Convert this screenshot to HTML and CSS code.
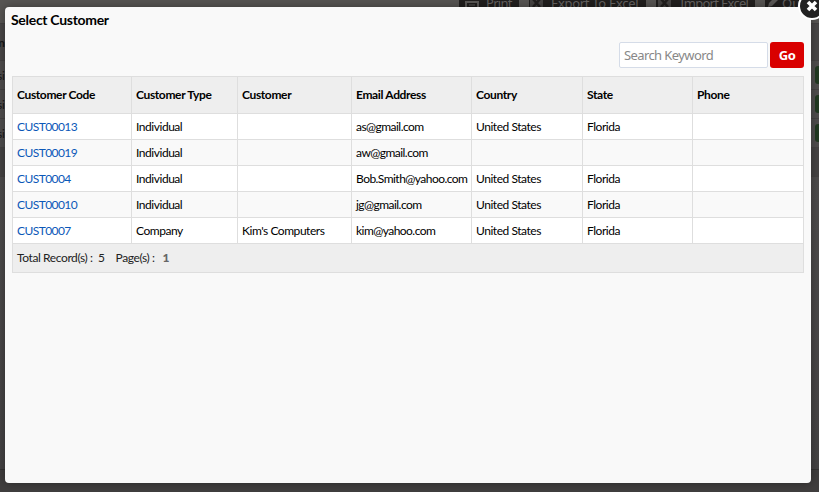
FILE: index.html
```html
<!DOCTYPE html>
<html lang="en">
<head>
<meta charset="utf-8">
<title>Select Customer</title>
<link rel="stylesheet" href="styles.css">
</head>
<body>
<div class="page">
  <div class="toolbar">
    <span class="tool print"><svg width="16" height="14" viewBox="0 0 16 14"><path d="M1 7h14v7H1zM3 9v4h10V9z" fill="#5b5957" fill-rule="evenodd"/><path d="M5 11h6" stroke="#5b5957"/></svg>Print</span>
    <span class="tool export"><svg width="13" height="14" viewBox="0 0 13 14"><path d="M0 1h13v13H0z" fill="#454342"/><path d="M3 5l7 8M10 5l-7 8" stroke="#211f1e" stroke-width="2.5"/></svg>Export To Excel</span>
    <span class="tool import"><svg width="13" height="14" viewBox="0 0 13 14"><path d="M0 1h13v13H0z" fill="#454342"/><path d="M3 5l7 8M10 5l-7 8" stroke="#211f1e" stroke-width="2.5"/></svg>Import Excel</span>
    <span class="tool quick"><svg width="12" height="14" viewBox="0 0 12 14"><path d="M2 13l1-4 6-6 3 3-6 6z" fill="#5b5957"/></svg>Qu</span>
  </div>
  <div class="line head"><b>n</b></div>
  <div class="line"><span>si</span><i></i></div>
  <div class="line"><span>si</span><i></i></div>
  <div class="line"><span>si</span><i></i></div>
  <div class="line pager"></div>
  <div class="rest"></div>
  <div class="footer"></div>
</div>
<section class="modal">
  <button class="close" aria-label="Close"><svg width="30" height="30" viewBox="0 0 30 30"><circle cx="15" cy="15" r="13" fill="#222" stroke="#fff" stroke-width="2"/><path d="M11 11l8 8M19 11l-8 8" stroke="#fff" stroke-width="3.6"/></svg></button>
  <h1>Select Customer</h1>
  <form class="search"><input type="text" placeholder="Search Keyword"><button type="button">Go</button></form>
  <table>
    <colgroup><col class="c1"><col class="c2"><col class="c3"><col class="c4"><col class="c5"><col class="c6"><col class="c7"></colgroup>
    <thead><tr><th>Customer Code</th><th>Customer Type</th><th>Customer</th><th>Email Address</th><th>Country</th><th>State</th><th>Phone</th></tr></thead>
    <tbody>
      <tr><td><a>CUST00013</a></td><td>Individual</td><td></td><td>as@gmail.com</td><td>United States</td><td>Florida</td><td></td></tr>
      <tr><td><a>CUST00019</a></td><td>Individual</td><td></td><td>aw@gmail.com</td><td></td><td></td><td></td></tr>
      <tr><td><a>CUST0004</a></td><td>Individual</td><td></td><td>Bob.Smith@yahoo.com</td><td>United States</td><td>Florida</td><td></td></tr>
      <tr><td><a>CUST00010</a></td><td>Individual</td><td></td><td>jg@gmail.com</td><td>United States</td><td>Florida</td><td></td></tr>
      <tr><td><a>CUST0007</a></td><td>Company</td><td>Kim's Computers</td><td>kim@yahoo.com</td><td>United States</td><td>Florida</td><td></td></tr>
    </tbody>
    <tfoot><tr><td colspan="7"><span class="total">Total Record(s) : &nbsp;5</span><span class="pages">Page(s) :</span><b>1</b></td></tr></tfoot>
  </table>
</section>
</body>
</html>
```
FILE: styles.css
```css
* { box-sizing: border-box; }
body { margin: 0; height: 492px; overflow: hidden; background: #504e4d; font: 12px/15px Lato, sans-serif; color: #000; }
.page { height: 492px; display: flex; flex-direction: column; background: #4e4c4c; }
.toolbar { height: 23px; display: flex; gap: 10px; padding-left: 459px; background: #575553; overflow: hidden; flex: none; }
.tool { height: 16px; display: flex; flex: none; background: #211f1e; color: #676463; font: 13px/7px "Noto Sans", sans-serif; white-space: nowrap; }
.tool svg { margin-top: -6px; flex: none; }
.print { width: 60px; padding-left: 5px; gap: 6px; letter-spacing: -.7px; }
.export { width: 117px; padding-left: 1px; gap: 8px; letter-spacing: -.3px; }
.import { width: 99px; padding-left: 2px; gap: 9px; letter-spacing: -.7px; }
.quick { width: 60px; padding-left: 1px; gap: 4px; }
.line { height: 29px; flex: none; display: flex; justify-content: space-between; align-items: center; border-bottom: 1px solid #444242; background: #4f4d4d; }
.line b, .line span { width: 5px; display: flex; justify-content: flex-end; color: #171616; }
.line i { width: 4px; height: 18px; border-radius: 3px 0 0 3px; background: #203820; }
.head { height: 38px; border-top: 1px solid #444242; background: #494747; }
.pager { background: #454343; }
.rest { flex: 1; border-bottom: 1px solid #343232; background: linear-gradient(#4e4c4c, #444243); }
.footer { height: 22px; background: #403e3e; }
.modal { position: absolute; left: 5px; top: 7px; width: 806px; height: 476px; padding: 5px 7px; border-radius: 4px; background: #f9f9f9; box-shadow: 0 0 10px rgba(0,0,0,.35); }
.close { position: absolute; top: -16px; right: -16px; width: 30px; height: 30px; padding: 0; border: 0; background: none; }
.close svg { display: block; }
h1 { margin: 0 0 0 -1px; font-size: 14px; line-height: 16px; letter-spacing: -.3px; }
.search { display: flex; justify-content: flex-end; gap: 2px; margin: 14px 0 8px; }
.search input { width: 149px; height: 26px; padding: 0 4px; border: 1px solid #d5dce8; border-radius: 2px; background: #fff; font: 13px "Noto Sans", sans-serif; letter-spacing: -.6px; }
.search input::placeholder { color: #888; opacity: 1; }
.search button { width: 34px; height: 26px; padding: 0; border: 0; border-radius: 3px; background: #d90000; color: #fff; font: bold 13px "Noto Sans", sans-serif; letter-spacing: -.4px; }
table { width: 792px; table-layout: fixed; border-collapse: separate; border-spacing: 0; border: solid #dedede; border-width: 1px 0 0 1px; }
.c1 { width: 119px; } .c2 { width: 106px; } .c3 { width: 114px; } .c4 { width: 120px; } .c5 { width: 111px; } .c6 { width: 110px; } .c7 { width: 111px; }
th, td { height: 26px; padding: 0 0 0 4px; border: solid #dedede; border-width: 0 1px 1px 0; background: #fff; text-align: left; white-space: nowrap; letter-spacing: -.46px; }
td:nth-child(4) { letter-spacing: -.54px; }
th { height: 37px; padding-bottom: 2px; background: #eee; font-size: 12px; letter-spacing: -.36px; }
tbody tr:nth-child(even) td { background: #f9f9f9; }
a { color: #0b58b8; letter-spacing: -.57px; }
tfoot td { height: 29px; padding-bottom: 2px; background: #eee; color: #222; letter-spacing: -.4px; }
.pages { margin: 0 8px 0 11px; }
tfoot b { color: #666; font-weight: 900; }
```
